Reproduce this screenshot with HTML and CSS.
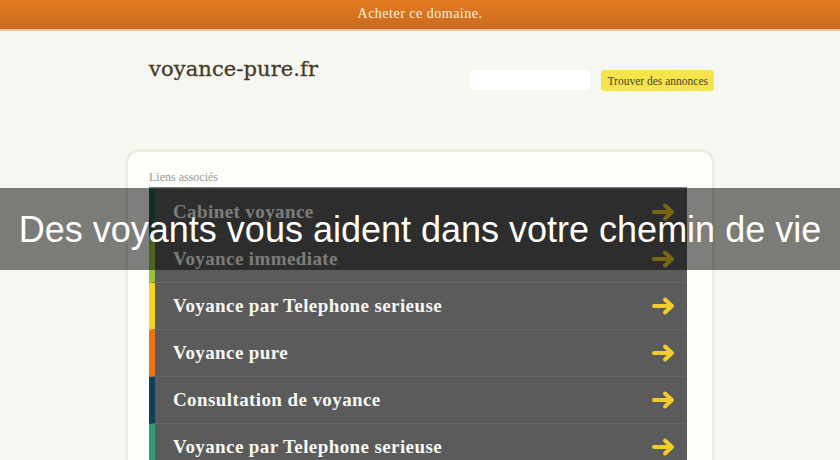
FILE: index.html
```html
<!DOCTYPE html>
<html lang="fr">
<head>
<meta charset="utf-8">
<title>voyance-pure.fr</title>
<link rel="stylesheet" href="styles.css">
</head>
<body>
<div class="topbar"><a class="buy" href="#">Acheter ce domaine.</a></div>
<div class="page">
  <header class="header">
    <div class="logo">voyance-pure.fr</div>
    <form class="search">
      <input class="search-input" type="text">
      <button class="search-btn" type="button">Trouver des annonces</button>
    </form>
  </header>
  <section class="box">
    <div class="box-title">Liens associés</div>
    <ul class="links">
      <li class="link c1"><span class="label">Cabinet voyance</span><svg class="arrow" viewBox="0 0 26 20"><path d="M3 10H21M14 3.5L21 10L14 16.5" fill="none" stroke="#f2cd2a" stroke-width="4" stroke-linecap="round" stroke-linejoin="round"/></svg></li>
      <li class="link c2"><span class="label">Voyance immediate</span><svg class="arrow" viewBox="0 0 26 20"><path d="M3 10H21M14 3.5L21 10L14 16.5" fill="none" stroke="#f2cd2a" stroke-width="4" stroke-linecap="round" stroke-linejoin="round"/></svg></li>
      <li class="link c3"><span class="label">Voyance par Telephone serieuse</span><svg class="arrow" viewBox="0 0 26 20"><path d="M3 10H21M14 3.5L21 10L14 16.5" fill="none" stroke="#f2cd2a" stroke-width="4" stroke-linecap="round" stroke-linejoin="round"/></svg></li>
      <li class="link c4"><span class="label">Voyance pure</span><svg class="arrow" viewBox="0 0 26 20"><path d="M3 10H21M14 3.5L21 10L14 16.5" fill="none" stroke="#f2cd2a" stroke-width="4" stroke-linecap="round" stroke-linejoin="round"/></svg></li>
      <li class="link c5"><span class="label">Consultation de voyance</span><svg class="arrow" viewBox="0 0 26 20"><path d="M3 10H21M14 3.5L21 10L14 16.5" fill="none" stroke="#f2cd2a" stroke-width="4" stroke-linecap="round" stroke-linejoin="round"/></svg></li>
      <li class="link c6"><span class="label">Voyance par Telephone serieuse</span><svg class="arrow" viewBox="0 0 26 20"><path d="M3 10H21M14 3.5L21 10L14 16.5" fill="none" stroke="#f2cd2a" stroke-width="4" stroke-linecap="round" stroke-linejoin="round"/></svg></li>
    </ul>
  </section>
</div>
<div class="overlay">Des voyants vous aident dans votre chemin de vie</div>
</body>
</html>
```
FILE: styles.css
```css
* { box-sizing: border-box; }
html, body { margin: 0; padding: 0; }
body {
  background: #f7f7f1;
  font-family: "DejaVu Serif", serif;
  overflow: hidden;
  height: 460px;
}
.topbar {
  height: 31px;
  background: linear-gradient(#e57c22, #c96a1f);
  border-bottom: 2px solid #e9c79a;
  display: flex;
  justify-content: center;
  align-items: center;
}
.buy {
  color: #fbf1dc;
  text-decoration: none;
  font-family: "Liberation Serif", serif;
  font-size: 14px;
  letter-spacing: 0.5px;
  padding-bottom: 2px;
}
.page {
  width: 590px;
  margin: 0 auto;
}
.header {
  display: flex;
  align-items: flex-start;
  justify-content: space-between;
  padding: 26px 0 0 24px;
  height: 118px;
}
.logo {
  font-family: "DejaVu Serif", serif;
  font-size: 21px;
  color: #453a2a;
  letter-spacing: 0.1px;
  -webkit-text-stroke: 0.3px #453a2a;
}
.search {
  display: flex;
  gap: 11px;
  margin-top: 13px;
  margin-right: 1px;
}
.search-input {
  width: 120px;
  height: 20px;
  border: none;
  border-radius: 3px;
  background: #ffffff;
  outline: none;
}
.search-btn {
  height: 21px;
  padding: 0 6px;
  border: none;
  border-radius: 3px;
  background: #f6e44d;
  color: #4a4430;
  font-family: "Liberation Serif", serif;
  font-size: 11.5px;
}
.box {
  border: 3px solid #ebebdf;
  border-bottom: none;
  border-radius: 14px 14px 0 0;
  background: #fdfdf9;
  padding: 18px 25px 0 21px;
  height: 320px;
}
.box-title {
  font-family: "Liberation Serif", serif;
  font-size: 12px;
  color: #9a9a90;
  margin-bottom: 2px;
}
.links {
  list-style: none;
  margin: 0;
  padding: 0;
  border-top: 2px solid #7c7c7c;
}
.link {
  height: 47px;
  display: flex;
  align-items: center;
  justify-content: space-between;
  background: #5b5b5b;
  border-left: 6px solid #1c5a48;
  border-bottom: 1px solid #666666;
  padding: 0 10px 1px 18px;
}
.c1 { border-left-color: #1e5c4b; }
.c2 { border-left-color: #9cc33e; }
.c3 { border-left-color: #f4d61f; }
.c4 { border-left-color: #ec7519; }
.c5 { border-left-color: #0f4259; }
.c6 { border-left-color: #2f9b7c; }
.label {
  font-family: "Liberation Serif", serif;
  font-weight: bold;
  font-size: 19px;
  color: #f7f7f2;
  letter-spacing: 0.4px;
}
.arrow {
  width: 26px;
  height: 20px;
}
.overlay {
  position: absolute;
  left: 0;
  top: 188px;
  width: 840px;
  height: 82px;
  background: rgba(0, 0, 0, 0.5);
  color: #ffffff;
  font-family: "Liberation Sans", Arial, sans-serif;
  font-size: 36px;
  display: flex;
  align-items: center;
  justify-content: center;
  padding-top: 1px;
}
```
